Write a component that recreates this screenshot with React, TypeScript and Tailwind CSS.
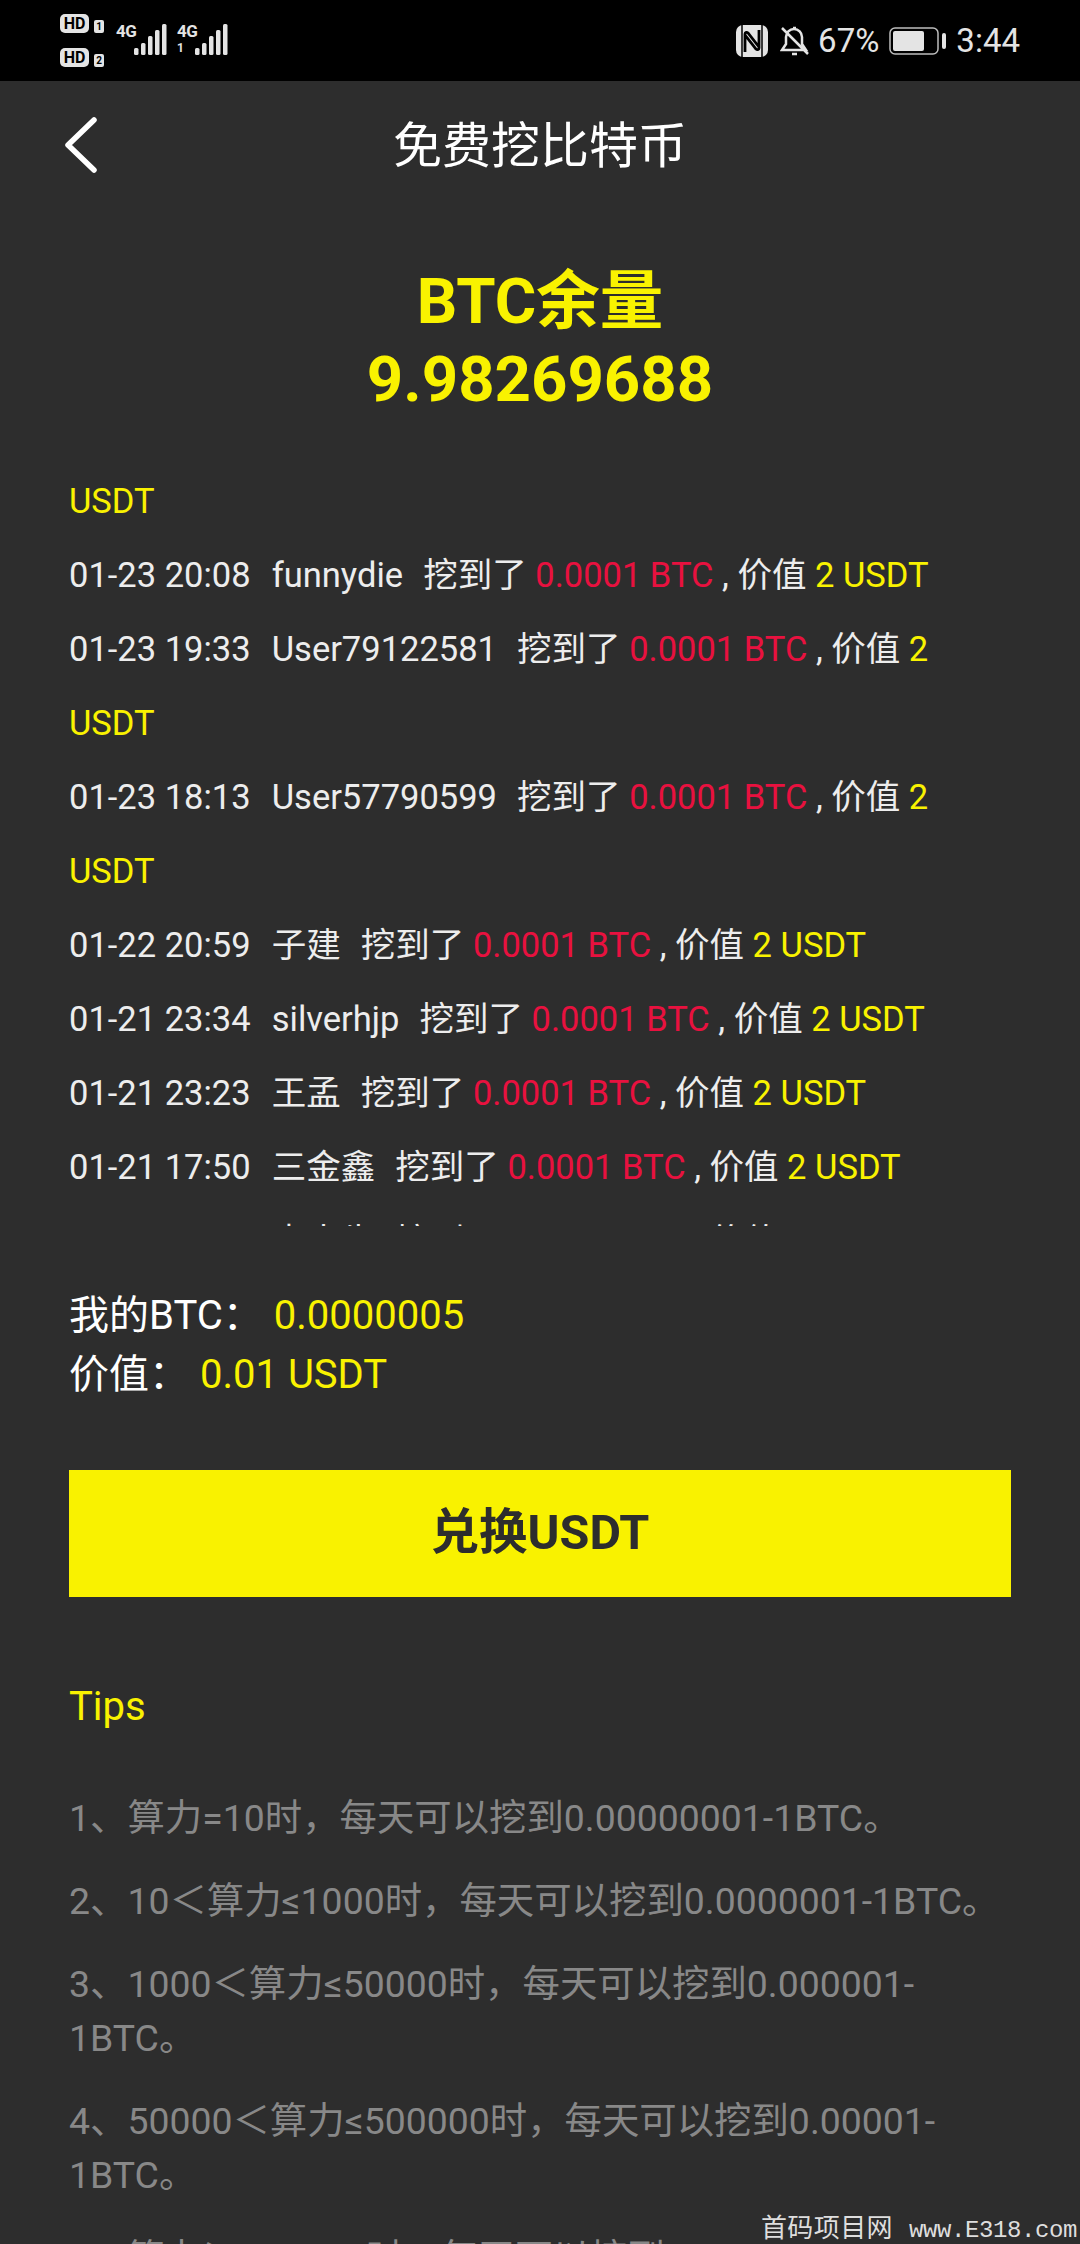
import React from "react";

const sans = "font-['Roboto','Noto_Sans_CJK_SC',sans-serif]";

const records = [
  { time: "01-23 20:08", user: "funnydie" },
  { time: "01-23 19:33", user: "User79122581" },
  { time: "01-23 18:13", user: "User57790599" },
  { time: "01-22 20:59", user: "子建" },
  { time: "01-21 23:34", user: "silverhjp" },
  { time: "01-21 23:23", user: "王孟" },
  { time: "01-21 17:50", user: "三金鑫" },
  { time: "01-21 15:12", user: "李大牛" },
];

const tips = [
  "1、算力=10时，每天可以挖到0.00000001-1BTC。",
  "2、10＜算力≤1000时，每天可以挖到0.0000001-1BTC。",
  "3、1000＜算力≤50000时，每天可以挖到0.000001-1BTC。",
  "4、50000＜算力≤500000时，每天可以挖到0.00001-1BTC。",
  "5、算力＞500000时，每天可以挖到0.0001-1BTC。",
];

function Signal({ sub }: { sub?: boolean }) {
  return (
    <div className="flex h-[31px]">
      <div className="flex flex-col w-[18px] text-[#e4e4e4] font-['Roboto',sans-serif] font-bold">
        <span className="text-[17px] leading-[14px] tracking-[-0.5px]">4G</span>
        {sub && <span className="text-[12px] leading-[12px] mt-[4px]">1</span>}
      </div>
      <svg width="33" height="31" viewBox="0 0 33 31" fill="#e4e4e4">
        <rect x="0" y="24" width="4.5" height="7" rx="1.5" />
        <rect x="7" y="19" width="4.5" height="12" rx="1.5" />
        <rect x="14" y="12" width="4.5" height="19" rx="1.5" />
        <rect x="21" y="6" width="4.5" height="25" rx="1.5" />
        <rect x="28" y="0" width="4.5" height="31" rx="1.5" />
      </svg>
    </div>
  );
}

function HdBadge({ n }: { n: string }) {
  return (
    <div className="flex items-end gap-[5px]">
      <span className="flex items-center justify-center w-[29px] h-[19px] rounded-[5px] bg-[#e4e4e4] text-black text-[16px] leading-none font-bold font-['Roboto',sans-serif]">
        HD
      </span>
      <span className="flex items-center justify-center w-[10px] h-[13px] rounded-[2px] bg-[#e4e4e4] text-black text-[10px] leading-none font-bold font-['Roboto',sans-serif]">
        {n}
      </span>
    </div>
  );
}

function StatusBar() {
  return (
    <div className="h-[81px] bg-black flex items-center justify-between pl-[60px] pr-[60px] shrink-0">
      <div className="flex items-center gap-[12px]">
        <div className="flex flex-col gap-[15px]">
          <HdBadge n="1" />
          <HdBadge n="2" />
        </div>
        <div className="flex gap-[10px] mt-[-2px]">
          <Signal />
          <Signal sub />
        </div>
      </div>
      <div className="flex items-center text-[#e4e4e4] text-[33px] font-['Roboto',sans-serif]">
        <svg width="32" height="32" viewBox="0 0 32 32" className="mr-[12px]">
          <rect x="0" y="0" width="32" height="32" rx="7" fill="#e4e4e4" />
          <path d="M6 0v32M26 0v32" stroke="#000" strokeWidth="1.5" />
          <path d="M9 27V9c0-2 2-2 3-1l11 14M23 5v18c0 2-2 2-3 1L9 10" fill="none" stroke="#000" strokeWidth="2.8" />
        </svg>
        <svg width="30" height="32" viewBox="0 0 30 32" fill="none" stroke="#e4e4e4" strokeWidth="2.5" className="mr-[8px]">
          <path d="M2 25h24l-4-6v-7a8 8 0 0 0-16 0v7zM12 29h5M13 3h3M2 3l26 26" />
        </svg>
        <span>67%</span>
        <svg width="58" height="28" viewBox="0 0 58 28" className="ml-[10px] mr-[9px]">
          <rect x="1" y="1" width="48" height="26" rx="5" fill="none" stroke="#bdbdbd" strokeWidth="1.5" />
          <rect x="4" y="4" width="31" height="20" rx="2" fill="#e4e4e4" />
          <rect x="53" y="6" width="4" height="16" rx="2" fill="#e4e4e4" />
        </svg>
        <span>3:44</span>
      </div>
    </div>
  );
}

export default function App() {
  return (
    <div className={`w-[1080px] h-[2244px] overflow-hidden relative bg-[#2d2d2d] flex flex-col ${sans}`}>
      <StatusBar />

      {/* Title bar */}
      <div className="h-[130px] relative flex items-center justify-center shrink-0">
        <svg width="40" height="60" viewBox="0 0 40 60" className="absolute left-[61px] top-[34px]" fill="none" stroke="#fff" strokeWidth="5.5" strokeLinecap="round" strokeLinejoin="round">
          <path d="M33 5L7 30l26 25" />
        </svg>
        <span className="text-white text-[49px] leading-none">免费挖比特币</span>
      </div>

      <div className="flex flex-col items-center text-[#f9f200] text-[63.5px] leading-[78px] font-bold mt-[52px] shrink-0">
        <span>BTC余量</span>
        <span>9.98269688</span>
      </div>

      {/* Mining records, clipped so the list starts mid-item */}
      <div className="mx-[69px] h-[762px] mt-[45px] overflow-hidden text-[34.5px] leading-[74px] text-[#ededed] shrink-0">
        <p className="text-[#f9f200]">USDT</p>
        {records.map((r) => (
          <p key={r.time}>
            {r.time}&nbsp;&nbsp;<span className="ml-[4px] mr-[3px]">{r.user}</span>&nbsp;&nbsp;挖到了{" "}
            <span className="text-[#e8113f]">0.0001 BTC</span> , 价值 <span className="text-[#f9f200]">2 USDT</span>
          </p>
        ))}
      </div>

      <div className="mx-[69px] mt-[60px] text-[40px] leading-[59px] text-white shrink-0">
        <p>
          我的BTC：<span className="text-[#f9f200] ml-[11px]">0.0000005</span>
        </p>
        <p>
          价值：<span className="text-[#f9f200] ml-[11px]">0.01 USDT</span>
        </p>
      </div>

      <button className="mx-[69px] mt-[66px] h-[127px] bg-[#f9f200] text-[#2d2d2d] text-[48.5px] font-bold flex items-center justify-center shrink-0">
        兑换USDT
      </button>

      <p className="mx-[69px] mt-[80px] text-[#f9f200] text-[40px] leading-[60px] shrink-0">Tips</p>

      <div className="mx-[69px] mt-[54px] flex flex-col gap-[29px] text-[37.4px] leading-[54px] text-[#888888] shrink-0">
        {tips.map((t) => (
          <p key={t}>{t}</p>
        ))}
      </div>

      {/* Site watermark */}
      <div className="absolute right-[3px] bottom-[-3px] flex items-baseline gap-[16px] text-[#dedede] leading-[32px] whitespace-nowrap font-['Liberation_Mono','Noto_Sans_CJK_SC',monospace]">
        <span className="text-[26px] tracking-[0.4px]">首码项目网</span>
        <span className="text-[24px] tracking-[-0.4px]">www.E318.com</span>
      </div>
    </div>
  );
}
